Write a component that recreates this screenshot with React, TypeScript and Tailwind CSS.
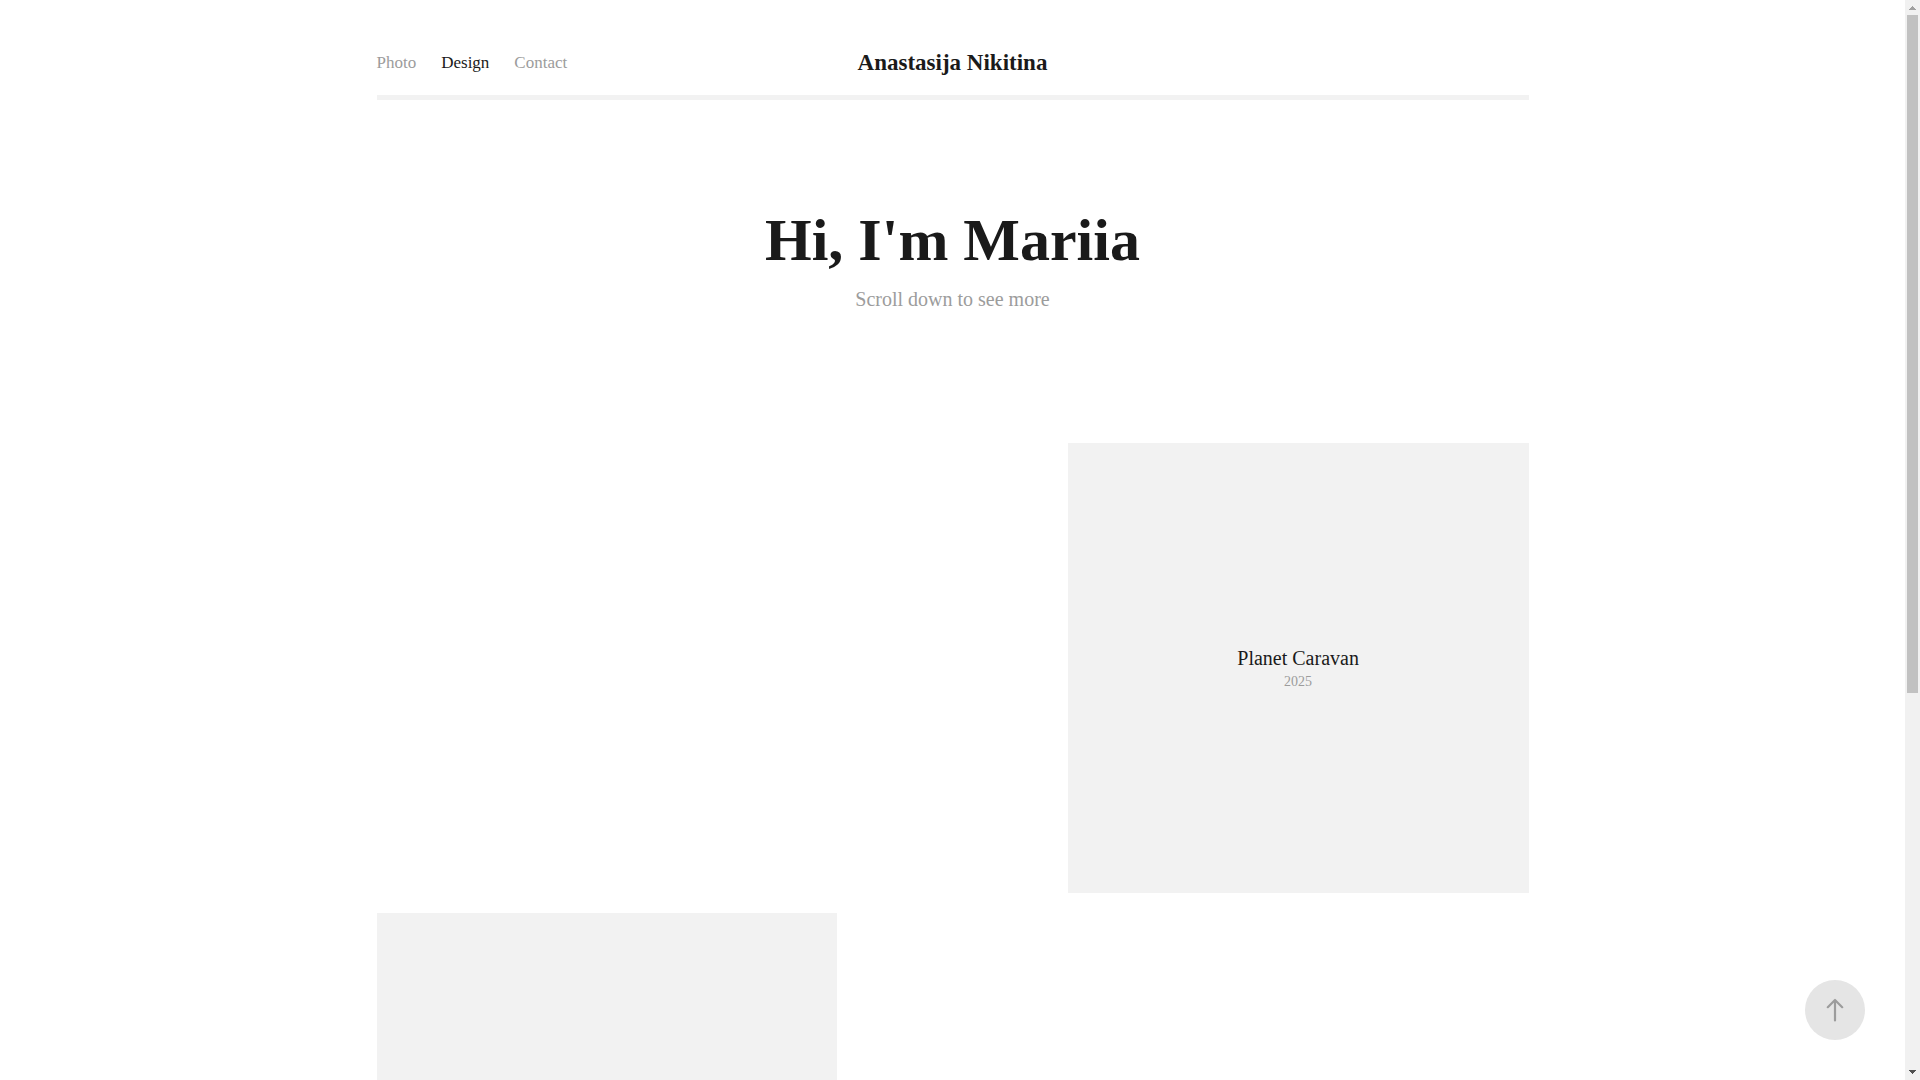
const links = [
  { label: "Photo", active: false },
  { label: "Design", active: true },
  { label: "Contact", active: false },
];

function Header() {
  return (
    <header className="grid grid-cols-3 items-center border-b-5 border-[#f2f2f2] pt-[49px] pb-[18px]">
      <nav className="flex gap-[25px] text-[17px] leading-6">
        {links.map((link) => (
          <a
            key={link.label}
            href="#"
            className={link.active ? "text-[#1a1a1a]" : "text-[#9c9c9c]"}
          >
            {link.label}
          </a>
        ))}
      </nav>
      <a href="#" className="text-center text-[23px] leading-7 font-bold whitespace-nowrap">
        Anastasija Nikitina
      </a>
    </header>
  );
}

function Hero() {
  return (
    <section className="pt-26 pb-[131px] text-center">
      <h1 className="text-[60px] leading-[72px] font-bold">Hi, I'm Mariia</h1>
      <p className="mt-2.5 text-[20px] leading-[26px] text-[#9c9c9c]">Scroll down to see more</p>
    </section>
  );
}

function ScrollBar() {
  return (
    <div aria-hidden="true" className="flex w-[15px] shrink-0 flex-col items-center bg-[#f1f1f1]">
      <svg className="h-[15px] w-[15px] shrink-0" viewBox="0 0 15 15" shapeRendering="crispEdges">
        <path d="M4 10V9h1V8h1V7h1V6h1v1h1v1h1v1h1v1z" fill="#a0a0a0" />
      </svg>
      <div className="min-h-0 w-full flex-1 px-0.5">
        <div className="h-[64.6%] bg-[#c1c1c1]" />
      </div>
      <svg className="h-[15px] w-[15px] shrink-0" viewBox="0 0 15 15" shapeRendering="crispEdges">
        <path d="M4 5v1h1v1h1v1h1v1h1V8h1V7h1V6h1V5z" fill="#505050" />
      </svg>
    </div>
  );
}

export default function App() {
  return (
    <div className="flex h-screen overflow-hidden bg-white font-['Liberation_Serif',serif] text-[#1a1a1a]">
      <div className="relative min-w-0 flex-1 overflow-hidden">
        <div className="mx-auto w-full max-w-6xl">
          <Header />
          <main>
            <Hero />
            <section className="flex flex-col gap-5">
              <a
                href="#"
                className="flex h-[450px] w-2/5 flex-col items-center justify-center self-end bg-[#f2f2f2]"
              >
                <h2 className="text-[20px] leading-6">Planet Caravan</h2>
                <p className="mt-0.5 text-[14px] leading-[19px] text-[#9c9c9c]">2025</p>
              </a>
              <a href="#" aria-label="Next project" className="h-[450px] w-2/5 bg-[#f2f2f2]" />
            </section>
          </main>
        </div>
        <button
          type="button"
          aria-label="Back to top"
          className="absolute right-10 bottom-10 flex size-15 items-center justify-center rounded-full bg-[#e5e5e5]"
        >
          <svg
            className="h-6 w-5"
            viewBox="0 0 20 24"
            fill="none"
            stroke="#9c9c9c"
            strokeWidth="2.2"
            strokeLinecap="round"
            strokeLinejoin="round"
          >
            <path d="M10 22.5V2M2.8 9.2L10 2l7.2 7.2" />
          </svg>
        </button>
      </div>
      <ScrollBar />
    </div>
  );
}
